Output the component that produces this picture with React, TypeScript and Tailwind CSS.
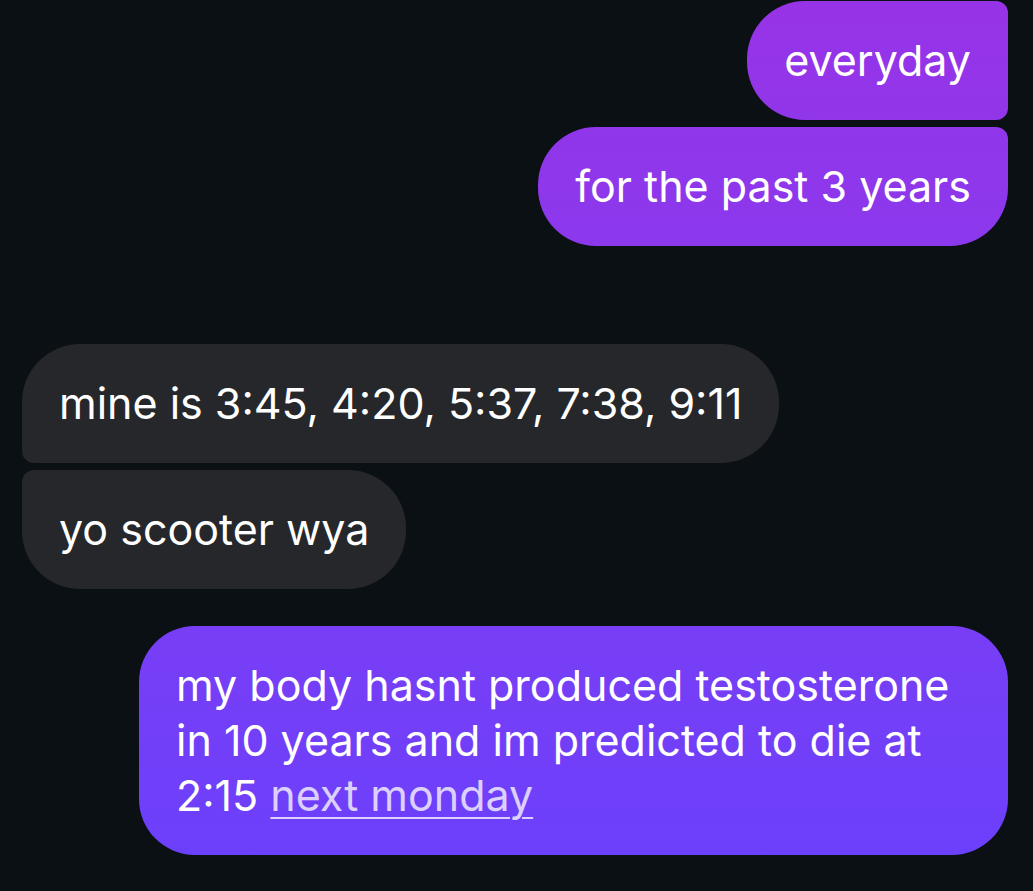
type Msg = {
  id: number;
  side: "me" | "them";
  text: React.ReactNode;
  corners: string;
};

const messages: Msg[] = [
  { id: 1, side: "me", text: "everyday", corners: "rounded-[58px] rounded-tr-[12px] rounded-br-[12px]" },
  { id: 2, side: "me", text: "for the past 3 years", corners: "rounded-[58px] rounded-tr-[12px]" },
];

const received: Msg[] = [
  { id: 3, side: "them", text: "mine is 3:45, 4:20, 5:37, 7:38, 9:11", corners: "rounded-[58px] rounded-bl-[12px]" },
  { id: 4, side: "them", text: "yo scooter wya", corners: "rounded-[58px] rounded-tl-[12px]" },
];

function Bubble({ msg }: { msg: Msg }) {
  const mine = msg.side === "me";
  return (
    <div className={mine ? "flex justify-end" : "flex justify-start"}>
      <div
        className={`${msg.corners} px-[37px] py-[32px] text-[43px] leading-[55px] text-white ${
          mine ? "bg-linear-to-b from-[#9733e7] to-[#6a40fc] bg-fixed" : "bg-[#25272b]"
        }`}
      >
        {msg.text}
      </div>
    </div>
  );
}

export default function App() {
  return (
    <div
      className="min-h-[891px] w-full bg-[#0b1014] pl-[22px] pr-[25px] pt-px"
      style={{ fontFamily: "Inter, 'Noto Sans', sans-serif" }}
    >
      <div className="flex flex-col gap-[7px]">
        {messages.map((m) => (
          <Bubble key={m.id} msg={m} />
        ))}
      </div>
      <div className="mt-[98px] flex flex-col gap-[7px]">
        {received.map((m) => (
          <Bubble key={m.id} msg={m} />
        ))}
      </div>
      <div className="mt-[37px] flex justify-end">
        <div className="w-[869px] rounded-[56px] bg-linear-to-b from-[#9733e7] to-[#6a40fc] bg-fixed px-[37px] py-[32px] text-[43px] leading-[55px] text-white">
          my body hasnt produced testosterone in 10 years and im predicted to die at 2:15{" "}
          <span className="text-[#dcd0ff] underline decoration-[#dcd0ff] decoration-2 underline-offset-[6px]">
            next monday
          </span>
        </div>
      </div>
    </div>
  );
}
